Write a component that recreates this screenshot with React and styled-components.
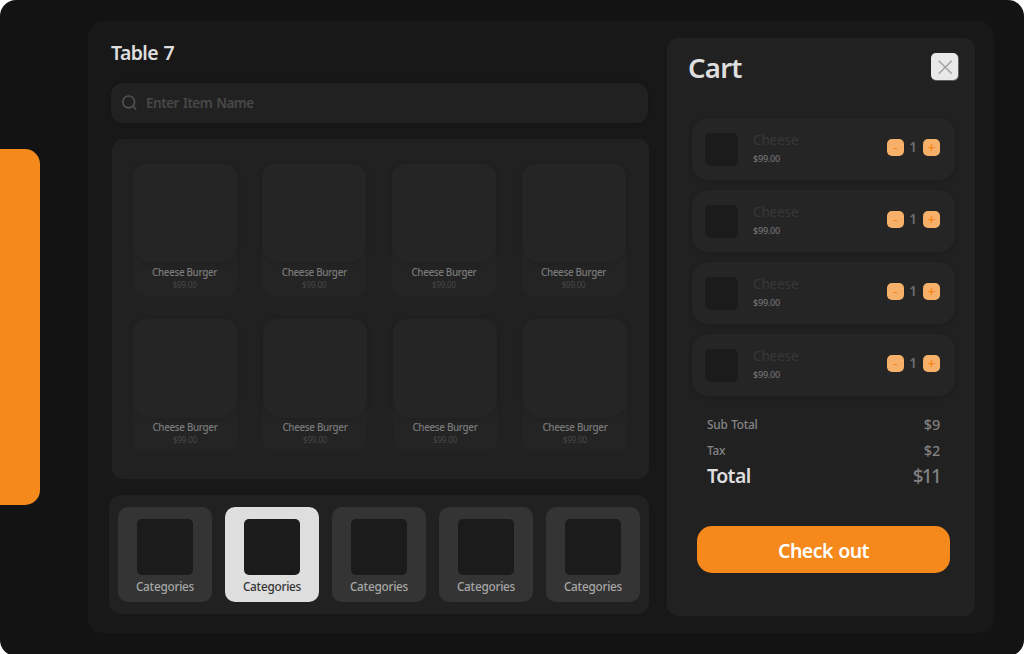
import React from "react";
import styled, { createGlobalStyle } from "styled-components";

const Global = createGlobalStyle`
  *, *::before, *::after { box-sizing: border-box; }
  html, body { margin: 0; background: #fff; }
  body { height: 654px; overflow: hidden; font-family: "Segoe UI", "Noto Sans", "Open Sans", sans-serif; }
  button, input { font-family: inherit; border: 0; padding: 0; margin: 0; }
`;

const Screen = styled.div`
  width: 1024px;
  height: 656px;
  background: #131313;
  border-radius: 16px;
  overflow: hidden;
  display: flex;
  align-items: flex-start;
`;

const SideTab = styled.nav`
  flex: none;
  width: 40px;
  height: 356px;
  margin-top: 149px;
  background: #f5891c;
  border-radius: 0 15px 15px 0;
`;

const Shell = styled.main`
  flex: none;
  width: 906px;
  height: 612px;
  margin: 21px 0 0 48px;
  padding: 17px 19px 0 21px;
  background: #181818;
  border-radius: 15px;
  display: flex;
  justify-content: space-between;
  align-items: flex-start;
`;

const MenuColumn = styled.section`
  width: 540px;
  display: flex;
  flex-direction: column;
`;

const Label = styled.span`
  display: block;
  white-space: nowrap;
  font-size: ${(p) => p.$size}px;
  line-height: ${(p) => p.$line}px;
  font-weight: ${(p) => p.$weight || 600};
  letter-spacing: ${(p) => p.$track || 0}px;
  color: ${(p) => p.$color};
`;

const Title = styled.h1`
  margin: 1px 0 0 2px;
  font-size: 19.5px;
  line-height: 28px;
  font-weight: 600;
  letter-spacing: -0.6px;
  word-spacing: 1px;
  color: #dedede;
`;

const CartTitle = styled.h2`
  margin: 0;
  font-size: 27.5px;
  line-height: 30px;
  font-weight: 600;
  letter-spacing: -0.75px;
  color: #dedede;
`;

const Search = styled.label`
  width: 537px;
  height: 40px;
  margin: 16px 0 0 2px;
  padding-left: 11px;
  display: flex;
  align-items: center;
  background: #212121;
  border-radius: 12px;
  box-shadow: 0 0 6px rgba(0, 0, 0, 0.12);
`;

const SearchInput = styled.input`
  flex: 1;
  margin-left: 9px;
  background: transparent;
  outline: none;
  color: #484848;
  font-size: 13.5px;
  font-weight: 600;
  letter-spacing: -0.5px;
  word-spacing: 1px;
  &::placeholder { color: #484848; opacity: 1; }
`;

const Menu = styled.div`
  width: 537px;
  height: 340px;
  margin: 16px 0 0 3px;
  padding: 25px 0 0 21px;
  background: #212121;
  border-radius: 11px;
  display: flex;
  flex-direction: column;
  gap: 23px;
`;

const MenuRow = styled.div`
  display: flex;
  margin-left: ${(p) => p.$shift}px;
  gap: ${(p) => p.$gap}px;
`;

const Dish = styled.article`
  width: 104px;
  height: 132px;
  background: #242424;
  border-radius: 12px;
  display: flex;
  flex-direction: column;
  align-items: center;
`;

const DishImage = styled.div`
  width: 104px;
  height: 99px;
  margin-bottom: 3px;
  background: #252525;
  border-radius: 14px 14px 20px 20px;
  box-shadow: 0 1px 7px rgba(0, 0, 0, 0.12);
`;

const Categories = styled.div`
  width: 540px;
  height: 119px;
  margin-top: 16px;
  padding: 12px 9px 0;
  background: #212121;
  border-radius: 12px;
  display: flex;
  gap: 13px;
`;

const Category = styled.button`
  width: 94px;
  height: 95px;
  padding-top: 12px;
  display: flex;
  flex-direction: column;
  align-items: center;
  background: ${(p) => (p.$active ? "#dedede" : "#343434")};
  border-radius: 10px;
`;

const CategoryImage = styled.div`
  width: 56px;
  height: 56px;
  margin-bottom: 2px;
  background: #1b1b1b;
  border-radius: 5px;
`;

const Cart = styled.aside`
  width: 308px;
  height: 578px;
  background: #212121;
  border-radius: 11px;
`;

const CartHeader = styled.header`
  height: 80px;
  padding: 15px 17px 0 21px;
  display: flex;
  justify-content: space-between;
  align-items: flex-start;
`;

const Close = styled.button`
  width: 27px;
  height: 27px;
  background: #e9e9e9;
  border-radius: 5px;
  box-shadow: 0.5px 0.5px 0 0.3px rgba(233, 233, 233, 0.4);
  display: flex;
  align-items: center;
  justify-content: center;
`;

const CartList = styled.div`
  padding: 0 20px 0 25px;
  display: flex;
  flex-direction: column;
  gap: 10px;
`;

const CartItem = styled.div`
  height: 62px;
  padding: 0 15px 0 13px;
  background: #252525;
  border-radius: 16px;
  box-shadow: 0 1px 6px rgba(0, 0, 0, 0.16);
  display: flex;
  align-items: flex-start;
`;

const Thumb = styled.div`
  width: 33px;
  height: 33px;
  margin: 15px 15px 0 0;
  background: #1b1b1b;
  border-radius: 5px;
`;

const ItemText = styled.div`
  padding-top: 12px;
  flex: 1;
`;

const Stepper = styled.div`
  margin-top: 21px;
  display: flex;
  align-items: center;
`;

const StepButton = styled.button`
  width: 17px;
  height: 17px;
  background: #f7b06a;
  border-radius: 5px;
  display: flex;
  align-items: center;
  justify-content: center;
`;

const Count = styled.span`
  width: 19px;
  height: 17px;
  padding-right: 1px;
  text-align: center;
  font-size: 13.5px;
  line-height: 17px;
  font-weight: 600;
  color: #6e6e6e;
`;

const Totals = styled.div`
  padding: 15px 35px 0 40px;
`;

const TotalRow = styled.div`
  height: 26px;
  display: flex;
  justify-content: space-between;
  align-items: center;
  word-spacing: 1px;
`;

const Checkout = styled.button`
  display: block;
  width: 253px;
  height: 47px;
  margin: 37px 0 0 30px;
  padding-top: 2px;
  background: #f5891c;
  border-radius: 15px;
  color: #fff;
  font-size: 19.5px;
  font-weight: 600;
  letter-spacing: -0.5px;
  word-spacing: 0.6px;
`;

const menuRows = [
  { id: "top", shift: -0.4, gap: 25.67 },
  { id: "bottom", shift: 0, gap: 26 },
];

function DishCard() {
  return (
    <Dish>
      <DishImage />
      <Label $size={9.8} $line={14} $weight={500} $track={-0.3} $color="#7a7a7a">Cheese Burger</Label>
      <Label $size={8} $line={10} $weight={400} $track={-0.2} $color="#484848">$99.00</Label>
    </Dish>
  );
}

function CartLine() {
  return (
    <CartItem>
      <Thumb />
      <ItemText>
        <Label $size={13.5} $line={20} $weight={400} $track={-0.15} $color="#383838">Cheese</Label>
        <Label $size={9} $line={18} $weight={500} $track={-0.2} $color="#747474">$99.00</Label>
      </ItemText>
      <Stepper>
        <StepButton aria-label="Remove one">
          <Label $size={13} $line={17} $color="#f5891c">-</Label>
        </StepButton>
        <Count>1</Count>
        <StepButton aria-label="Add one">
          <Label $size={14} $line={17} $color="#f5891c">+</Label>
        </StepButton>
      </Stepper>
    </CartItem>
  );
}

export default function App() {
  return (
    <>
      <Global />
      <Screen>
        <SideTab />
        <Shell>
          <MenuColumn>
            <Title>Table 7</Title>
            <Search>
              <svg width="15" height="16" viewBox="0 0 15 16" fill="none" stroke="#505050" strokeWidth="1.7" strokeLinecap="round">
                <circle cx="6.7" cy="6.9" r="5.9" />
                <path d="M11 11.2L13.6 13.8" />
              </svg>
              <SearchInput placeholder="Enter Item Name" />
            </Search>
            <Menu>
              {menuRows.map((row) => (
                <MenuRow key={row.id} $shift={row.shift} $gap={row.gap}>
                  {[0, 1, 2, 3].map((i) => <DishCard key={i} />)}
                </MenuRow>
              ))}
            </Menu>
            <Categories>
              {[0, 1, 2, 3, 4].map((i) => (
                <Category key={i} $active={i === 1}>
                  <CategoryImage />
                  <Label $size={11.8} $line={18} $weight={500} $track={-0.25} $color={i === 1 ? "#343434" : "#a6a6a6"}>Categories</Label>
                </Category>
              ))}
            </Categories>
          </MenuColumn>
          <Cart>
            <CartHeader>
              <CartTitle>Cart</CartTitle>
              <Close aria-label="Close">
                <svg width="16" height="16" viewBox="0 0 16 16" stroke="#a5a5a5" strokeWidth="1.6" strokeLinecap="round">
                  <path d="M2.2 2.2L14.3 14.3M14.3 2.2L2.2 14.3" />
                </svg>
              </Close>
            </CartHeader>
            <CartList>
              {[0, 1, 2, 3].map((i) => <CartLine key={i} />)}
            </CartList>
            <Totals>
              <TotalRow>
                <Label $size={11.8} $line={22} $weight={500} $track={-0.25} $color="#858585">Sub Total</Label>
                <Label $size={14.5} $line={21} $weight={500} $track={-0.2} $color="#808080">$9</Label>
              </TotalRow>
              <TotalRow>
                <Label $size={11.8} $line={22} $weight={500} $track={-0.25} $color="#858585">Tax</Label>
                <Label $size={14.5} $line={21} $weight={500} $track={-0.2} $color="#808080">$2</Label>
              </TotalRow>
              <TotalRow>
                <Label $size={19.5} $line={26} $track={-0.6} $color="#dedede">Total</Label>
                <Label $size={19} $line={26} $weight={500} $track={-1.8} $color="#808080">$11</Label>
              </TotalRow>
            </Totals>
            <Checkout>Check out</Checkout>
          </Cart>
        </Shell>
      </Screen>
    </>
  );
}
